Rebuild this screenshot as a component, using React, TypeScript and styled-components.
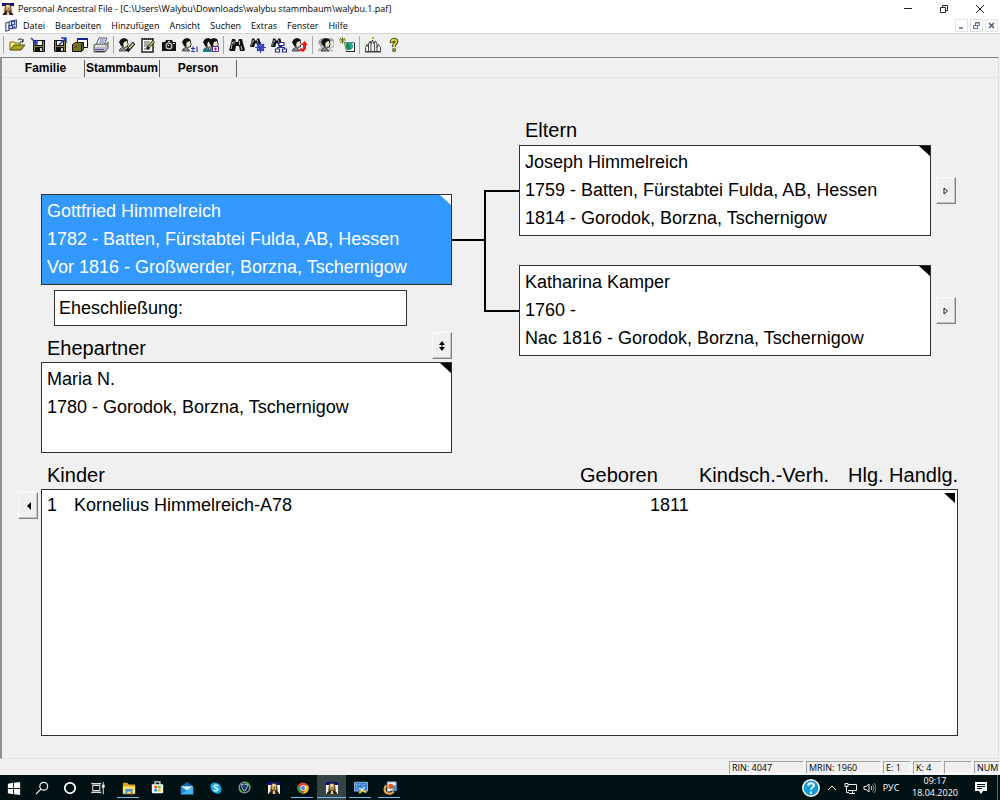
import React from 'react';
import styled, { createGlobalStyle, css } from 'styled-components';

const GlobalStyle = createGlobalStyle`
  * { box-sizing: border-box; }
  html, body { margin: 0; padding: 0; }
  button { font: inherit; color: inherit; border: 0; padding: 0; background: none; cursor: default; }
  svg { display: block; }
`;

const ui = `"Open Sans", "Noto Sans", sans-serif`;
const arial = `"Liberation Sans", Arial, sans-serif`;

const Window = styled.div`
  min-height: 100vh;
  display: flex;
  flex-direction: column;
  background: #f0f0f0;
  color: #000;
  font-family: ${ui};
  font-size: 9px;
  line-height: 12px;
`;

const TitleBar = styled.header`
  display: flex;
  align-items: center;
  height: 18px;
  padding: 0 2px;
  background: #fff;
`;

const Title = styled.h1`
  flex: 1;
  margin: 0 0 0 4px;
  font-size: 9px;
  font-weight: 400;
  white-space: nowrap;
`;

const CaptionButton = styled.button`
  width: 36px;
  height: 17px;
  display: grid;
  place-items: center;
`;

const MenuBar = styled.nav`
  display: flex;
  align-items: center;
  height: 16px;
  padding: 0 2px 0 5px;
  background: #fff;
  border-bottom: 1px solid #d4d4d4;
`;

const MenuItem = styled.button`
  padding: 0 5px;
`;

const MdiButtons = styled.div`
  display: flex;
  gap: 2px;
  margin-left: auto;
`;

const MdiButton = styled.button`
  width: 13px;
  height: 13px;
  display: grid;
  place-items: center;
  border: 1px solid #e3e3e3;
  background: #fff;
`;

const ToolBar = styled.div`
  display: flex;
  align-items: center;
  height: 23px;
  padding: 0 1px 1px;
`;

const ToolButton = styled.button`
  width: 21px;
  height: 20px;
  display: grid;
  place-items: center;
`;

const Separator = styled.span`
  width: 1px;
  height: 18px;
  margin: 0 2px;
  background: #a8a8a8;
`;

const Client = styled.main`
  flex: 1;
  display: flex;
  flex-direction: column;
  border-top: 1px solid #808080;
  border-left: 2px solid #909090;
  margin-right: 1px;
  border-right: 1px solid #e0e0e0;
  border-bottom: 1px solid #e2e2e2;
`;

const Tabs = styled.div`
  display: flex;
  height: 20px;
  border-bottom: 1px solid #e4e4e4;
  font-family: ${arial};
  font-size: 12px;
  font-weight: 700;
`;

const Tab = styled.button<{ $width: number }>`
  width: ${p => p.$width}px;
  margin-top: 2px;
  height: 17px;
  line-height: 17px;
  border-right: 1px solid #606060;
  text-align: center;
  &:first-child { padding-left: 5px; }
`;

const Page = styled.div`
  flex: 1;
  display: flex;
  flex-direction: column;
  padding: 38px 40px 22px 16px;
  font-family: ${arial};
  font-size: 18px;
  line-height: 28px;
`;

const Tree = styled.div`
  display: grid;
  grid-template-columns: minmax(0, 411fr) 67px minmax(0, 439fr);
  padding-left: 23px;
`;

const Couple = styled.section`
  padding-top: 78px;
`;

const Connector = styled.svg`
  margin-top: 73px;
  width: 67px;
  height: 123px;
`;

const Label = styled.h2`
  margin: 0;
  padding-left: 6px;
  font-size: 20px;
  font-weight: 400;
  line-height: 28px;
`;

const corner = css<{ $selected?: boolean }>`
  &::after {
    content: '';
    position: absolute;
    top: 0;
    right: 0;
    width: 11px;
    height: 10px;
    background: ${p => (p.$selected ? '#fff' : '#000')};
    clip-path: polygon(0 0, 100% 0, 100% 100%);
  }
`;

const Card = styled.article<{ $selected?: boolean }>`
  position: relative;
  flex: 1;
  min-width: 0;
  min-height: 91px;
  padding: 2px 5px;
  border: 1px solid #303030;
  white-space: nowrap;
  background: ${p => (p.$selected ? '#3399ff' : '#fff')};
  color: ${p => (p.$selected ? '#fff' : '#000')};
  ${corner}
`;

const Marriage = styled.div`
  margin: 5px 45px 0 13px;
  height: 36px;
  padding: 3px 4px;
  border: 1px solid #303030;
  background: #fff;
`;

const SpouseHead = styled.div`
  display: flex;
  justify-content: space-between;
  align-items: flex-start;
  height: 36px;
  padding-top: 6px;
`;

const SpouseLabel = styled(Label)`
  align-self: flex-end;
`;

const Parents = styled.section`
  display: flex;
  flex-direction: column;
  gap: 29px;
  padding-right: 2px;
`;

const ParentsLabel = styled(Label)`
  margin-bottom: -28px;
`;

const ParentRow = styled.div`
  display: flex;
  align-items: center;
  gap: 5px;
`;

const SmallButton = styled.button`
  flex: none;
  width: 20px;
  height: 27px;
  display: grid;
  place-items: center;
  border: 1px solid;
  border-color: #fafafa #808080 #808080 #fafafa;
  box-shadow: inset -1px -1px 0 #c4c4c4;
`;

const ChildrenRow = styled.section`
  flex: 1;
  display: flex;
  gap: 3px;
  margin-top: 8px;
`;

const PreviousSlot = styled.div`
  padding-top: 31px;
`;

const ChildTable = styled.table`
  flex: 1;
  display: flex;
  flex-direction: column;
`;

const ChildHead = styled.thead`
  display: block;
  font-size: 20px;
`;

const HeadRow = styled.tr`
  display: grid;
  grid-template-columns: 1fr 119px 149px 110px;
  padding-left: 6px;
`;

const HeadCell = styled.th`
  padding: 0;
  font-weight: 400;
  text-align: left;
  white-space: nowrap;
`;

const ChildBody = styled.tbody`
  position: relative;
  flex: 1;
  display: block;
  min-height: 120px;
  padding: 1px 5px;
  border: 1px solid #303030;
  background: #fff;
  ${corner}
  &::after {
    top: 3px;
    right: 2px;
  }
`;

const ChildRow = styled.tr`
  display: grid;
  grid-template-columns: 27px 1fr 302px;
`;

const Cell = styled.td`
  padding: 0;
  white-space: nowrap;
`;

const StatusBar = styled.footer`
  display: flex;
  justify-content: flex-end;
  gap: 2px;
  height: 16px;
  padding: 2px 0 1px;
`;

const StatusCell = styled.span<{ $width: number }>`
  width: ${p => p.$width}px;
  padding-left: 2px;
  border: 1px solid;
  border-color: #a0a0a0 #fff #fff #a0a0a0;
  line-height: 12px;
  font-size: 9px;
  white-space: nowrap;
`;

const TaskBar = styled.div`
  display: flex;
  height: 25px;
  background: #001113;
  color: #fff;
`;

const TaskGroup = styled.div`
  display: flex;
  margin-right: 2px;
`;

const TaskButton = styled.button<{ $width: number; $open?: boolean; $active?: boolean }>`
  position: relative;
  width: ${p => p.$width}px;
  height: 25px;
  display: grid;
  place-items: center;
  background: ${p => (p.$active ? '#344345' : 'transparent')};
  ${p => p.$open && css`
    &::after {
      content: '';
      position: absolute;
      left: ${p.$active ? 0 : 3}px;
      right: ${p.$active ? 0 : 4}px;
      bottom: 2px;
      height: 1px;
      background: #76b9ed;
    }
  `}
`;

const Tray = styled.div`
  display: flex;
  align-items: center;
  margin-left: auto;
`;

const TrayButton = styled.button<{ $width: number }>`
  width: ${p => p.$width}px;
  height: 25px;
  display: grid;
  place-items: center;
`;

const Clock = styled.button`
  width: 60px;
  height: 25px;
  padding-bottom: 1px;
  text-align: center;
  line-height: 12px;
`;

const ShowDesktop = styled.button`
  width: 3px;
  height: 25px;
  border-left: 1px solid #5c696a;
`;

const Icon = ({ children, size = 16 }: { children: React.ReactNode; size?: number }) => (
  <svg width={size} height={size} viewBox="0 0 16 16" aria-hidden="true">{children}</svg>
);

const Portrait = ({ size = 13 }: { size?: number }) => (
  <Icon size={size}>
    <path fill="#f4efe4" d="M0 0h16v16H0z" />
    <path fill="#0c0c8a" d="M0 0h16v4H0z" />
    <path fill="#5f4320" d="M4 4c0-4 8-4 8 0l1 7-1 3H4l-1-3z" />
    <path fill="#e0b871" d="M5 4c1-2 5-2 6 0v5c-1 3-5 3-6 0z" />
    <path fill="#fae3ab" d="M6 3h3v3H6z" />
    <path fill="#3a260e" d="M6 6h1v1H6zM9 6h1v1H9zM6 9h4v1H6zM8 7h1v1H8z" />
    <path fill="#2b1e12" d="M1 16c1-3 2-4 4-4l3 2 3-2c2 0 3 1 4 4z" />
    <path fill="#d8c9a0" d="M7 12h2l1 4H6z" />
  </Icon>
);

const Head = ({ x = 0, fill = '#eae6cc' }: { x?: number; fill?: string }) => (
  <g transform={`translate(${x} 0)`}>
    <path fill="#111" d="M1 7L0 5l2-3 3-1 3 1 1 2-2 1-1 3-2 2-2-1z" />
    <path fill={fill} d="M5 5l3-1v2l1 1-1 1v2H6L4 8z" />
    <path fill="none" stroke="#111" strokeWidth=".8" d="M8.500 4v2l1 1.500-1 .5v2H6l-1 2" />
    <path fill="#8a8a8a" stroke="#222" strokeWidth=".7" d="M0 14l1-2 3-2 2 2 2 2z" />
  </g>
);

const Binoculars = () => (
  <g>
    <path fill="#111" d="M3 2h3l1 3h2l1-3h3l1 4 2 7-1 1h-4l-1-5H7l-1 5H1l-1-1 2-7z" />
    <path stroke="#eee" strokeWidth=".8" d="M3.500 5L2 12M10.500 4v4M12 9l1 4M5 4v3" fill="none" />
  </g>
);

const Floppy = () => (
  <g>
    <path fill="#111" d="M3 3h12v12H4l-1-1z" />
    <path fill="#8d8b1c" d="M4 4h1v10H4zM13 4h1v10h-1zM5 9h8v1H5z" />
    <path fill="#f2f2f2" d="M6 4h6v4H6z" />
    <path fill="#d0d0d0" d="M10 11h2v3h-2z" />
  </g>
);

const tools: Record<string, React.ReactNode> = {
  'Öffnen': <>
    <path fill="#fff27a" stroke="#6e6a10" d="M1 13V5h4l1 1h5v3" />
    <path fill="#a9a526" stroke="#4c4a10" d="M1 13l4-5h11l-4 5z" />
    <path fill="none" stroke="#111" d="M9 3c2-2 4-1 5 1M14 2v3h-3" />
  </>,
  'Sichern': <><Floppy /><path stroke="#2740c8" strokeWidth="1.500" fill="none" d="M1 1l6 6M7 3v4H3" /></>,
  'Wiederherstellen': <><Floppy /><path stroke="#2740c8" strokeWidth="1.500" fill="none" d="M8 8l7-7M10 1h5v5" /></>,
  'Importieren': <>
    <path fill="#fff" stroke="#111" d="M5.500 1.500h10v9h-10z" /><path fill="#1a2490" d="M5 1h11v2H5z" />
    <path fill="#77751a" stroke="#111" d="M.5 7.500l3-2h8l-2 2v7h-9zM9.500 7.500l2-2v7l-2 2" />
    <path fill="#c41616" d="M3 9h2v2H3z" /><path fill="#1c9a2c" d="M6 9h2v2H6z" />
  </>,
  'Drucken': <>
    <path fill="#fff" stroke="#555" d="M6 1h8l-3 7H3z" /><path stroke="#4864d0" d="M7 3h5M6 5h5" />
    <path fill="#bbb" stroke="#555" d="M1 8l2-1h11l1-2v6l-3 4H1z" /><path stroke="#fff" d="M2 9h10" />
    <path fill="#4450bd" d="M2 12h9v1H2z" /><path fill="#333" d="M2 14h10l-1 1H3z" />
  </>,
  'Person bearbeiten': <><Head /><path stroke="#111" strokeWidth="3.500" d="M8 14l7-8" /><path stroke="#d8d18c" strokeWidth="1.800" d="M10 11.500L14.500 6.500" /></>,
  'Notizen': <>
    <path fill="#fff" stroke="#222" strokeWidth="1.500" d="M2 2h11v13H2z" /><path stroke="#222" strokeDasharray="1 1" strokeWidth="2" d="M2 2h12" />
    <path stroke="#555" d="M4 5h6M4 7h5M4 9h4M4 12h6" /><path stroke="#222" strokeWidth="3" d="M7 12l7-8" /><path stroke="#c9c363" strokeWidth="1.500" d="M9 10l5-6" />
  </>,
  'Multimedia': <>
    <path fill="#161616" d="M1 5h3l1-2h6l1 2h3v9H1z" /><circle cx="8" cy="9" r="3.500" fill="#ccc" /><circle cx="8" cy="9" r="2.300" fill="#222" />
    <path fill="#ddd" d="M7 4h2v1H7zM12 6h2v1h-2z" /><path fill="#fff" d="M7 8h1v1H7z" />
  </>,
  'Person hinzufügen': <><Head /><path stroke="#2b35b0" strokeWidth="1.200" d="M9 11.500h4M11 9.500v4M9 14.500h4M15 9.500V15" /></>,
  'Familie hinzufügen': <>
    <Head /><Head x={6} /><path fill="#18808a" d="M0 15c1-4 4-4 6-3l3 3z" /><path fill="#fff" stroke="#6220a8" d="M9.500 9.500h6v5h-6z" /><path stroke="#6220a8" d="M11 12h3M12.500 10.500v3" />
  </>,
  'Suchen': <Binoculars />,
  'RIN suchen': <>
    <g transform="scale(.72)"><Binoculars /></g>
    <path fill="#dfe0ff" d="M7 7h7v7H7z" />
    <path stroke="#3540b8" strokeWidth="1.200" fill="none" d="M5 10.500h11M10.500 5v11M7 7l7 7M14 7l-7 7M7.500 7.500h6v6h-6z" />
  </>,
  'Familie suchen': <>
    <g transform="scale(.72)"><Binoculars /></g>
    <path fill="#ffffd0" stroke="#2731a0" strokeWidth="1.200" d="M8 5.500h5v3H8zM4.500 12h4v3h-4zM11.500 12h4v3h-4zM10.500 9v1.500M6.500 12v-1.500h7V12" />
  </>,
  'Zurück': <><Head /><path fill="#f01717" d="M7 13l2-2 2 1V8H9l3.500-4L16 8h-2v4l-3 3z" /></>,
  'Zusammenführen': <><g opacity=".35"><Head /><Head x={7} /></g><Head x={3} /></>,
  'Internet': <>
    <path fill="#fff" stroke="#777" d="M5.500 5.500h10v9h-8z" /><circle cx="10" cy="9" r="4" fill="#28a6a0" /><path fill="#1c8a38" d="M8 6l3 1-1 3 2 2-3 1-2-4z" />
    <path stroke="#777a18" d="M0 3h7M3.500 0v7M1 1l5 5M6 1L1 6" /><path fill="#222" d="M7 14h9v1H7zM15 6h1v9h-1z" />
  </>,
  'Tempel': <>
    <path fill="#f5f5f5" stroke="#333" strokeWidth=".9" d="M.5 14.500v-4l1.500-3 1.500 3V7L5 4l1 3 1.500-4L9 7l1.500-3L12 7v3.500l1.500-3 2 3v4z" />
    <path stroke="#333" strokeWidth=".9" d="M3.500 10v5M6 7v7M9.500 7v7M12 10v5M0 15h16" /><path fill="#b6ae14" d="M7 0h2v2H7z" />
  </>,
  'Hilfe': <>
    <path fill="none" stroke="#222" strokeWidth="3.600" d="M5.500 6c0-4 5-4 5-1.500 0 2-2.500 2-2.500 4.500v1" /><path fill="none" stroke="#e5dc25" strokeWidth="1.900" d="M5.500 5.500c0-3.500 5-3.500 5-1 0 2-2.500 2-2.500 4.500v1" />
    <path fill="#e5dc25" stroke="#222" strokeWidth=".8" d="M6.800 11.800h2.500v2.500H6.800z" />
  </>,
};

const toolGroups = [
  ['Öffnen', 'Sichern', 'Wiederherstellen', 'Importieren', 'Drucken'],
  ['Person bearbeiten', 'Notizen', 'Multimedia', 'Person hinzufügen', 'Familie hinzufügen'],
  ['Suchen', 'RIN suchen', 'Familie suchen', 'Zurück'],
  ['Zusammenführen', 'Internet'],
  ['Tempel', 'Hilfe'],
];

const menus = ['Datei', 'Bearbeiten', 'Hinzufügen', 'Ansicht', 'Suchen', 'Extras', 'Fenster', 'Hilfe'];

const systemButtons: [string, React.ReactNode][] = [
  ['Start', <path fill="#fff" d="M1 3l6-1v6H1zM8 2l7-1v7H8zM1 9h6v6l-6-1zM8 9h7v7l-7-1z" />],
  ['Suche', <g fill="none" stroke="#fff" strokeWidth="1.300"><circle cx="10" cy="6" r="4.500" /><path d="M7 9l-6 6" /></g>],
  ['Cortana', <circle cx="8" cy="8" r="6" fill="none" stroke="#fff" strokeWidth="2" />],
  ['Aufgabenansicht', <g fill="none" stroke="#ddd" strokeWidth="1.200"><path d="M2 5h8v6H2zM1 2v1h10V2M1 14v-1h10v1M14 1v14" /><path fill="#fff" d="M13 5h2v2h-2z" /></g>],
];

const appButtons: { name: string; open?: boolean; active?: boolean; art: React.ReactNode }[] = [
  { name: 'Explorer', open: true, art: <Icon size={14}><path fill="#dba324" d="M1 2h5l2 2h7v11H1z" /><path fill="#ffdc6a" d="M1 6h14v8H1z" /><path fill="#3f93d8" d="M4 9h8v6h-2v-3H6v3H4z" /></Icon> },
  { name: 'Store', art: <Icon size={13}><path d="M5 5V1h6v4" stroke="#ddd" fill="none" strokeWidth="1.500" /><path fill="#f5f5f5" d="M1 4h14v10l-1 1H2l-1-1z" /><path fill="#e84c25" d="M4 6h3.500v3H4z" /><path fill="#76b82a" d="M8.500 6H12v3H8.500z" /><path fill="#1795db" d="M4 10h3.500v3H4z" /><path fill="#f2b319" d="M8.500 10H12v3H8.500z" /></Icon> },
  { name: 'Mail', art: <Icon size={14}><path fill="#0869b5" d="M1 6l7-5 7 5v9H1z" /><path fill="#e9f5fd" d="M1 6h14l-7 5z" /><path fill="#178fdf" d="M1 6l7 5 7-5v9H1z" /><path fill="#45b8f4" d="M1 15L15 6v9z" /></Icon> },
  { name: 'Skype', art: <Icon size={12}><circle cx="6" cy="6" r="5.500" fill="#0fa5e8" /><circle cx="10" cy="10" r="5.500" fill="#0fa5e8" /><circle cx="8" cy="8" r="6.500" fill="#18aeea" /><path stroke="#fff" strokeWidth="1.800" fill="none" d="M11 5C9 3.500 5 4 5.500 6.200 6 8.500 10.500 7.500 10.500 10c0 2-4 2.500-5.500.5" /></Icon> },
  { name: 'Sicherheit', art: <Icon size={13}><circle cx="8" cy="8" r="6.500" fill="none" stroke="#7b8b89" strokeWidth="2" /><path stroke="#43bd54" strokeWidth="2" fill="none" d="M8 1.500A6.500 6.500 0 0114.500 8M5 14a6.500 6.500 0 01-3-4" /><path fill="#c3d0e6" d="M4 4l4-1 4 1c0 5-1 7-4 9-3-2-4-4-4-9z" /><path fill="#233a68" d="M5 5l3-1 3 1c0 4-1 5-3 7-2-2-3-3-3-7z" /></Icon> },
  { name: 'PAF', art: <Portrait size={12} /> },
  { name: 'Chrome', open: true, art: <Icon size={12}><circle cx="8" cy="8" r="7.500" fill="#e34133" /><path fill="#2ca14d" d="M1.500 4.300L8 15.500A7.500 7.500 0 011.500 4.300z" /><path fill="#fbc718" d="M8 4.500h6.700A7.500 7.500 0 018 15.500l3.300-6z" /><circle cx="8" cy="8" r="3.600" fill="#fff" /><circle cx="8" cy="8" r="2.700" fill="#4285ef" /></Icon> },
  { name: 'Personal Ancestral File', open: true, active: true, art: <Portrait size={12} /> },
  { name: 'Snipping', open: true, art: <Icon size={14}><path fill="#3c82d6" stroke="#9fc7ee" d="M.5 1.500h15v10H.5z" /><path stroke="#b9dcf9" strokeDasharray="1 2" d="M3 4h9M3 9h8M3 4v5M12 4v5" fill="none" /><path stroke="#ececec" strokeWidth="1.500" d="M6 8l6 4M12 7l-4 5" /><path stroke="#edbd26" strokeWidth="2.200" d="M10 11l4 2M9 11l-3 3" /></Icon> },
  { name: 'Paint', open: true, art: <Icon size={14}><path fill="#e8eef4" stroke="#6da9df" d="M5 1h10v10H5z" /><path fill="#4e94d8" d="M11 5h4v6h-4z" /><path fill="none" stroke="#f0a94e" strokeWidth="2.500" d="M4 5c-3 2-3 8 1 9 3 1 6 0 7-2" /><circle cx="9" cy="6" r="3" fill="#e0591d" /><path fill="#fff" d="M5 9h5l-2 3H5z" /></Icon> },
];

const ArrowRight = () => (
  <svg width="6" height="8" viewBox="0 0 6 8"><path d="M1 1v6l3.500-3z" fill="none" stroke="#222" /></svg>
);

const App = () => (
  <Window>
    <GlobalStyle />
    <TitleBar>
      <Portrait size={12} />
      <Title>Personal Ancestral File - [C:\Users\Walybu\Downloads\walybu stammbaum\walybu.1.paf]</Title>
      <CaptionButton aria-label="Minimieren"><svg width="10" height="10"><path d="M1 4.500h8" stroke="#222" /></svg></CaptionButton>
      <CaptionButton aria-label="Wiederherstellen"><svg width="10" height="10" fill="none" stroke="#222"><path d="M1.500 3.500h5v5h-5zM3.500 3V1.500h5v5H7" /></svg></CaptionButton>
      <CaptionButton aria-label="Schließen"><svg width="10" height="10"><path d="M1 1l8 8M9 1L1 9" stroke="#222" /></svg></CaptionButton>
    </TitleBar>
    <MenuBar>
      <Icon size={13}>
        <path fill="#fff" stroke="#32427e" strokeWidth="1.300" d="M1 5l4-1v10l-4 1zM5 3l9-2v10l-4 1" /><path fill="#dbe3ff" stroke="#26379a" strokeWidth="1.300" d="M8 3h4v4H8zM5 8h4v4H5zM9 10h4" />
      </Icon>
      {menus.map(m => <MenuItem key={m}>{m}</MenuItem>)}
      <MdiButtons>
        <MdiButton aria-label="Fenster minimieren"><svg width="9" height="9"><path d="M2 7h4" stroke="#5c7188" strokeWidth="1.500" /></svg></MdiButton>
        <MdiButton aria-label="Fenster wiederherstellen"><svg width="9" height="9" fill="none" stroke="#5c7188"><path d="M1.500 4.500h4v3h-4zM3.500 4V1.500h4v3H6M3 2h5" /></svg></MdiButton>
        <MdiButton aria-label="Fenster schließen"><svg width="9" height="9"><path d="M2 2l5 5M7 2L2 7" stroke="#4c6178" strokeWidth="1.700" /></svg></MdiButton>
      </MdiButtons>
    </MenuBar>
    <ToolBar>
      {toolGroups.map((group, i) => (
        <React.Fragment key={i}>
          <Separator />
          {group.map(t => <ToolButton key={t} aria-label={t}><Icon>{tools[t]}</Icon></ToolButton>)}
        </React.Fragment>
      ))}
    </ToolBar>
    <Client>
      <Tabs role="tablist">
        <Tab role="tab" aria-selected="true" $width={83}>Familie</Tab>
        <Tab role="tab" $width={75}>Stammbaum</Tab>
        <Tab role="tab" $width={77}>Person</Tab>
      </Tabs>
      <Page>
        <Tree>
          <Couple>
            <Card $selected>
              <div>Gottfried Himmelreich</div>
              <div>1782 - Batten, Fürstabtei Fulda, AB, Hessen</div>
              <div>Vor 1816 - Großwerder, Borzna, Tschernigow</div>
            </Card>
            <Marriage>Eheschließung:</Marriage>
            <SpouseHead>
              <SpouseLabel>Ehepartner</SpouseLabel>
              <SmallButton aria-label="Ehepartner wechseln">
                <svg width="8" height="10" viewBox="0 0 8 10"><path d="M4 0l3 4H1zM4 10L1 6h6zM3.500 3h1v4h-1z" /></svg>
              </SmallButton>
            </SpouseHead>
            <Card>
              <div>Maria N.</div>
              <div>1780 - Gorodok, Borzna, Tschernigow</div>
            </Card>
          </Couple>
          <Connector viewBox="0 0 67 123" aria-hidden="true">
            <path d="M0 51h33M67 2H33v120h34" fill="none" stroke="#000" strokeWidth="2" />
          </Connector>
          <Parents>
            <ParentsLabel>Eltern</ParentsLabel>
            <ParentRow>
              <Card>
                <div>Joseph Himmelreich</div>
                <div>1759 - Batten, Fürstabtei Fulda, AB, Hessen</div>
                <div>1814 - Gorodok, Borzna, Tschernigow</div>
              </Card>
              <SmallButton aria-label="Zum Vater"><ArrowRight /></SmallButton>
            </ParentRow>
            <ParentRow>
              <Card>
                <div>Katharina Kamper</div>
                <div>1760 -</div>
                <div>Nac 1816 - Gorodok, Borzna, Tschernigow</div>
              </Card>
              <SmallButton aria-label="Zur Mutter"><ArrowRight /></SmallButton>
            </ParentRow>
          </Parents>
        </Tree>
        <ChildrenRow>
          <PreviousSlot>
            <SmallButton aria-label="Zum Kind"><svg width="5" height="8"><path d="M5 0v8L1 4z" /></svg></SmallButton>
          </PreviousSlot>
          <ChildTable>
            <ChildHead>
              <HeadRow>
                <HeadCell>Kinder</HeadCell>
                <HeadCell>Geboren</HeadCell>
                <HeadCell>Kindsch.-Verh.</HeadCell>
                <HeadCell>Hlg. Handlg.</HeadCell>
              </HeadRow>
            </ChildHead>
            <ChildBody>
              <ChildRow>
                <Cell>1</Cell>
                <Cell>Kornelius Himmelreich-A78</Cell>
                <Cell>1811</Cell>
              </ChildRow>
            </ChildBody>
          </ChildTable>
        </ChildrenRow>
      </Page>
    </Client>
    <StatusBar>
      <StatusCell $width={75}>RIN: 4047</StatusCell>
      <StatusCell $width={75}>MRIN: 1960</StatusCell>
      <StatusCell $width={28}>E: 1</StatusCell>
      <StatusCell $width={29}>K: 4</StatusCell>
      <StatusCell $width={28} />
      <StatusCell $width={26}>NUM</StatusCell>
    </StatusBar>
    <TaskBar>
      <TaskGroup>
        {systemButtons.map(([name, art]) => (
          <TaskButton key={name} aria-label={name} $width={28}><Icon size={14}>{art}</Icon></TaskButton>
        ))}
      </TaskGroup>
      <TaskGroup>
        {appButtons.map(a => (
          <TaskButton key={a.name} aria-label={a.name} $width={29} $open={a.open} $active={a.active}>{a.art}</TaskButton>
        ))}
      </TaskGroup>
      <Tray>
        <TrayButton $width={24} aria-label="Hilfe"><Icon size={18}><circle cx="8" cy="8" r="7.300" fill="#129bd8" stroke="#fff" strokeWidth="1.300" /><path fill="none" stroke="#fff" strokeWidth="1.800" d="M5.500 6c0-3 5-3 5-.3C10.500 7.500 8 7.500 8 9.500M8 11v2" /></Icon></TrayButton>
        <TrayButton $width={18} aria-label="Ausgeblendete Symbole"><svg width="10" height="7"><path d="M1 6l4-4 4 4" fill="none" stroke="#fff" /></svg></TrayButton>
        <TrayButton $width={20} aria-label="Netzwerk"><svg width="14" height="12" fill="none" stroke="#eee"><path d="M4 2.500h8.500v6H4M5 11.500h6M8.500 9v2M1 1.500h3v3H1zM2.500 5v5.500H5" /></svg></TrayButton>
        <TrayButton $width={16} aria-label="Lautstärke"><svg width="13" height="12" fill="none" stroke="#eee"><path d="M1 4.500h2L6 2v8L3 7.500H1zM8 4c1 1 1 3 0 4" /><path stroke="#8a9596" d="M9.500 2.500c2 2 2 5 0 7M11 1c2.500 3 2.500 7 0 10" /></svg></TrayButton>
        <TrayButton $width={28} lang="ru">РУС</TrayButton>
        <Clock>09:17<br />18.04.2020</Clock>
        <TrayButton $width={32} aria-label="Benachrichtigungen"><svg width="14" height="13"><path fill="#fff" d="M1 1h12v9H9l-2 3-2-3H1z" /><path stroke="#001113" d="M3 3.500h8M3 5.500h8M3 7.500h5" /></svg></TrayButton>
        <ShowDesktop aria-label="Desktop anzeigen" />
      </Tray>
    </TaskBar>
  </Window>
);

export default App;
